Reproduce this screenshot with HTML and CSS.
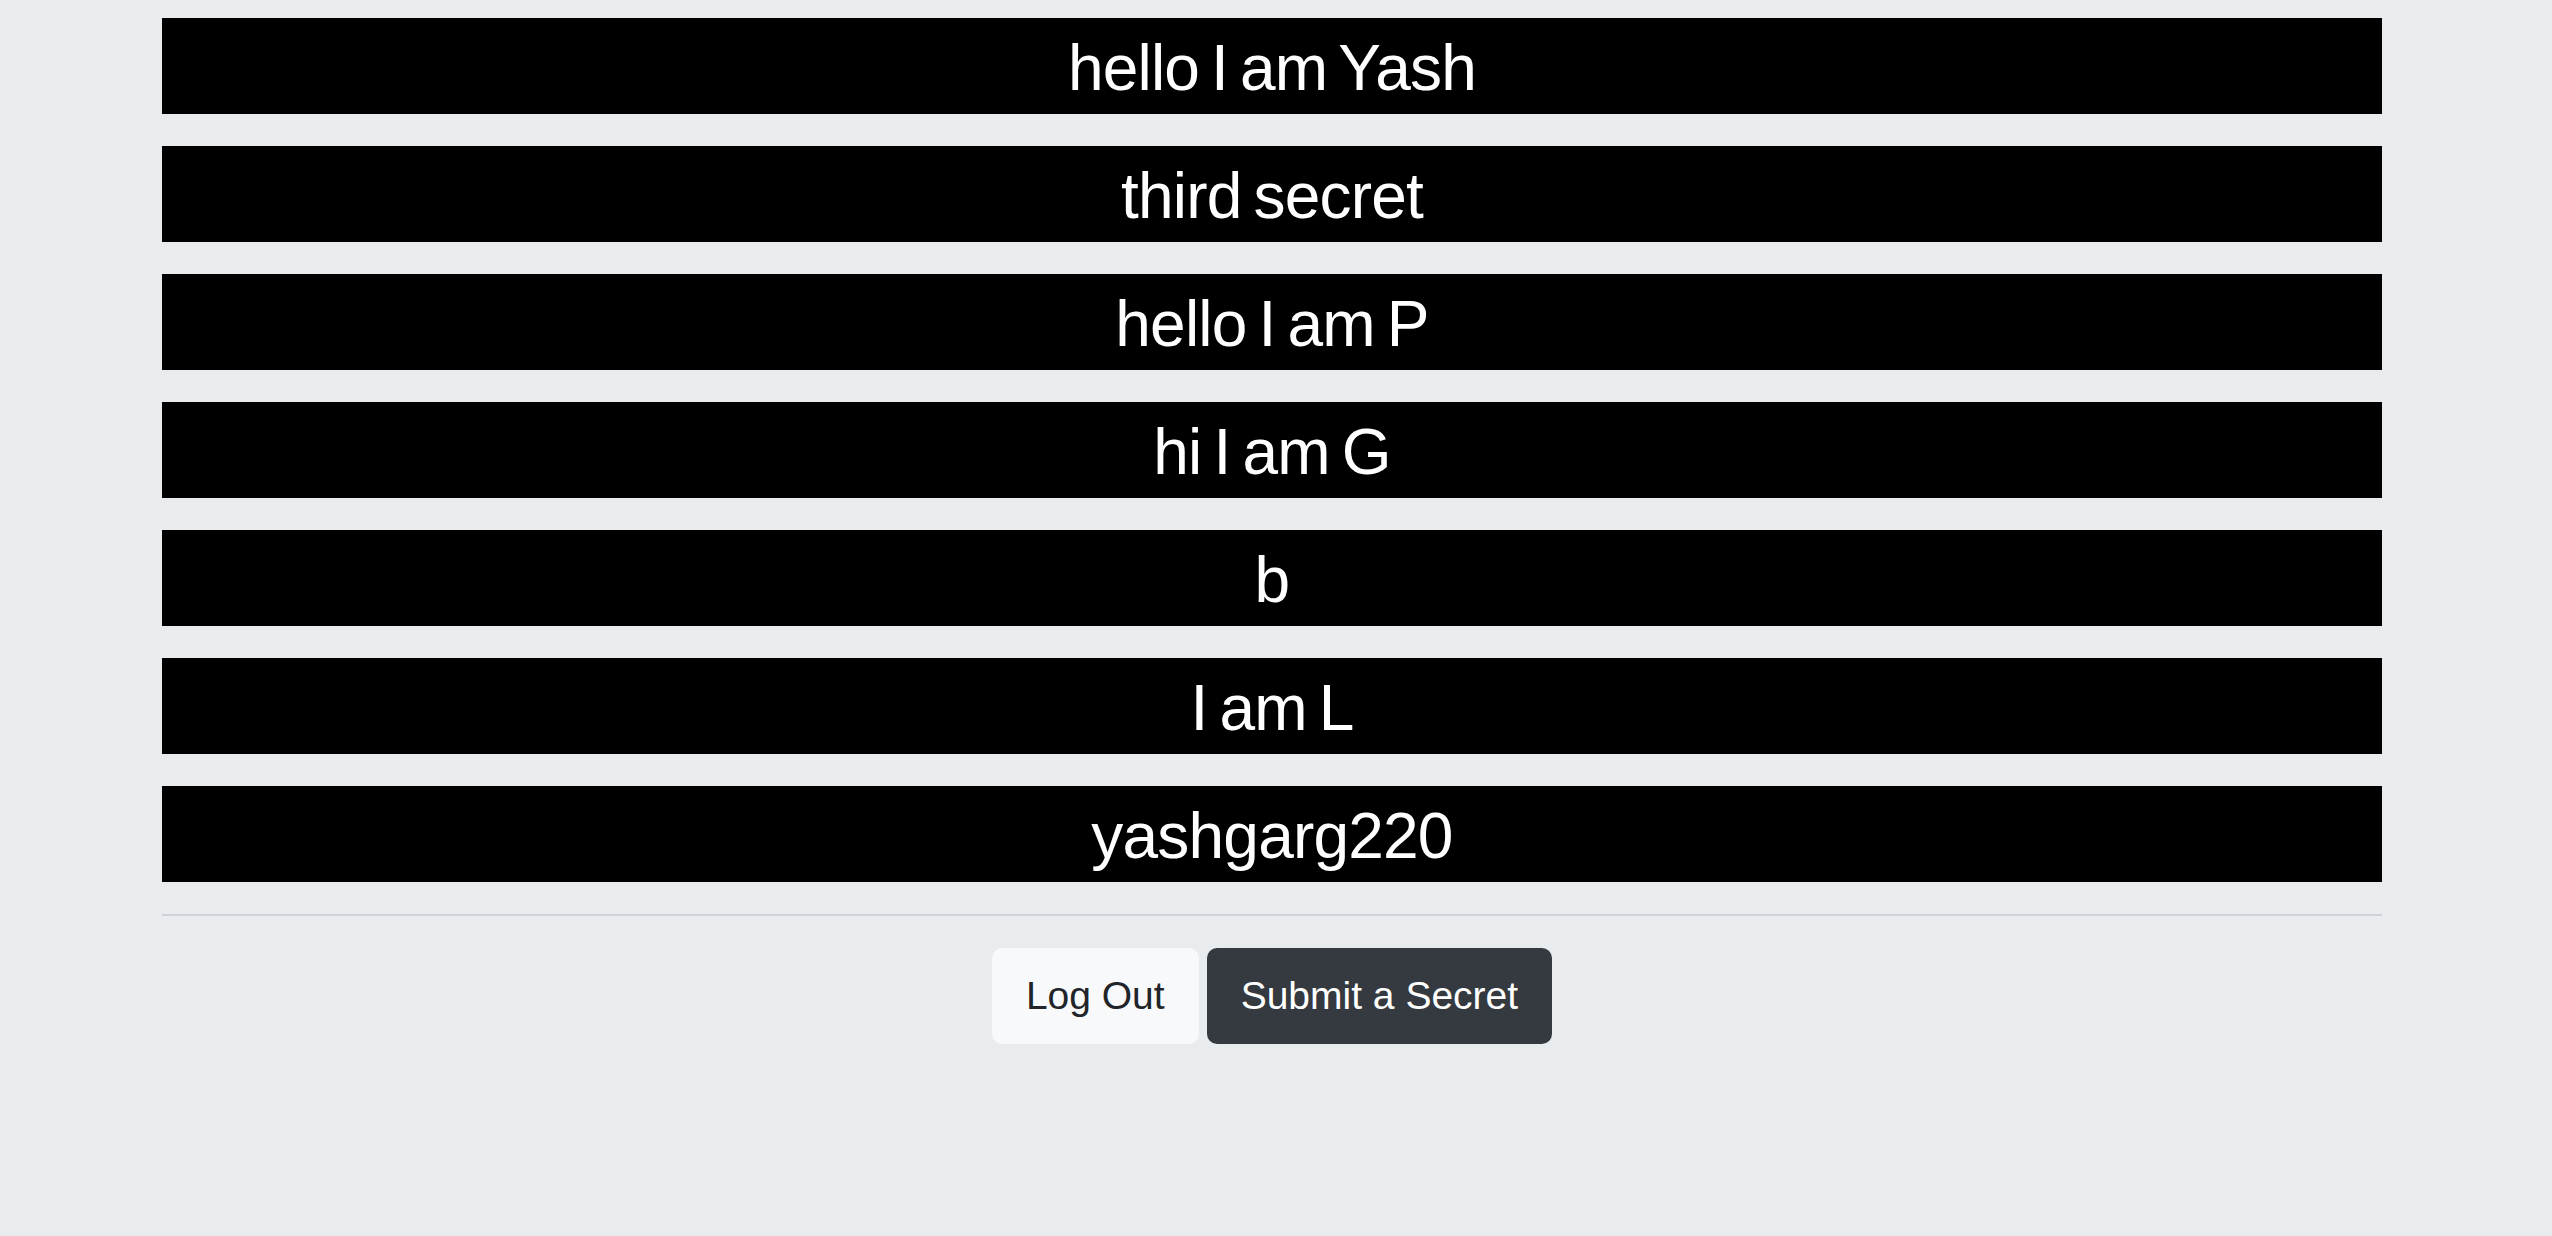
FILE: index.html
```html
<!DOCTYPE html>
<html lang="en">
<head>
<meta charset="utf-8">
<title>Secrets</title>
<link rel="stylesheet" href="styles.css">
</head>
<body>
<div class="container">
  <p class="secret-text">hello I am Yash</p>
  <p class="secret-text">third secret</p>
  <p class="secret-text">hello I am P</p>
  <p class="secret-text">hi I am G</p>
  <p class="secret-text">b</p>
  <p class="secret-text">I am L</p>
  <p class="secret-text">yashgarg220</p>
  <hr class="divider">
  <div class="actions">
    <a class="btn btn-light" href="#">Log Out</a>
    <a class="btn btn-dark" href="#">Submit a Secret</a>
  </div>
</div>
</body>
</html>
```
FILE: styles.css
```css
html, body {
  margin: 0;
  padding: 0;
}
body {
  background: #e8ecef;
  font-family: "Liberation Sans", Arial, sans-serif;
  min-height: 1236px;
}
.container {
  width: 2220px;
  margin-left: 162px;
  padding-top: 18px;
}
.secret-text {
  margin: 0 0 32px 0;
  height: 96px;
  box-sizing: border-box;
  padding-top: 5px;
  line-height: 91px;
  background: #000;
  color: #fff;
  font-size: 64px;
  letter-spacing: -0.8px;
  word-spacing: -5px;
  text-align: center;
  white-space: nowrap;
}
.divider {
  margin: 0 0 32px 0;
  border: 0;
  height: 2px;
  background: #cfd3d7;
}
.actions {
  display: flex;
  justify-content: center;
  gap: 8px;
}
.btn {
  display: inline-block;
  box-sizing: border-box;
  height: 96px;
  padding: 16px 32px;
  border: 2px solid transparent;
  border-radius: 10px;
  font-size: 39px;
  line-height: 60px;
  text-decoration: none;
}
.btn-light {
  background: #f8f9fa;
  border-color: #f8f9fa;
  color: #212529;
}
.btn-dark {
  background: #343a40;
  border-color: #343a40;
  color: #fff;
}
```
